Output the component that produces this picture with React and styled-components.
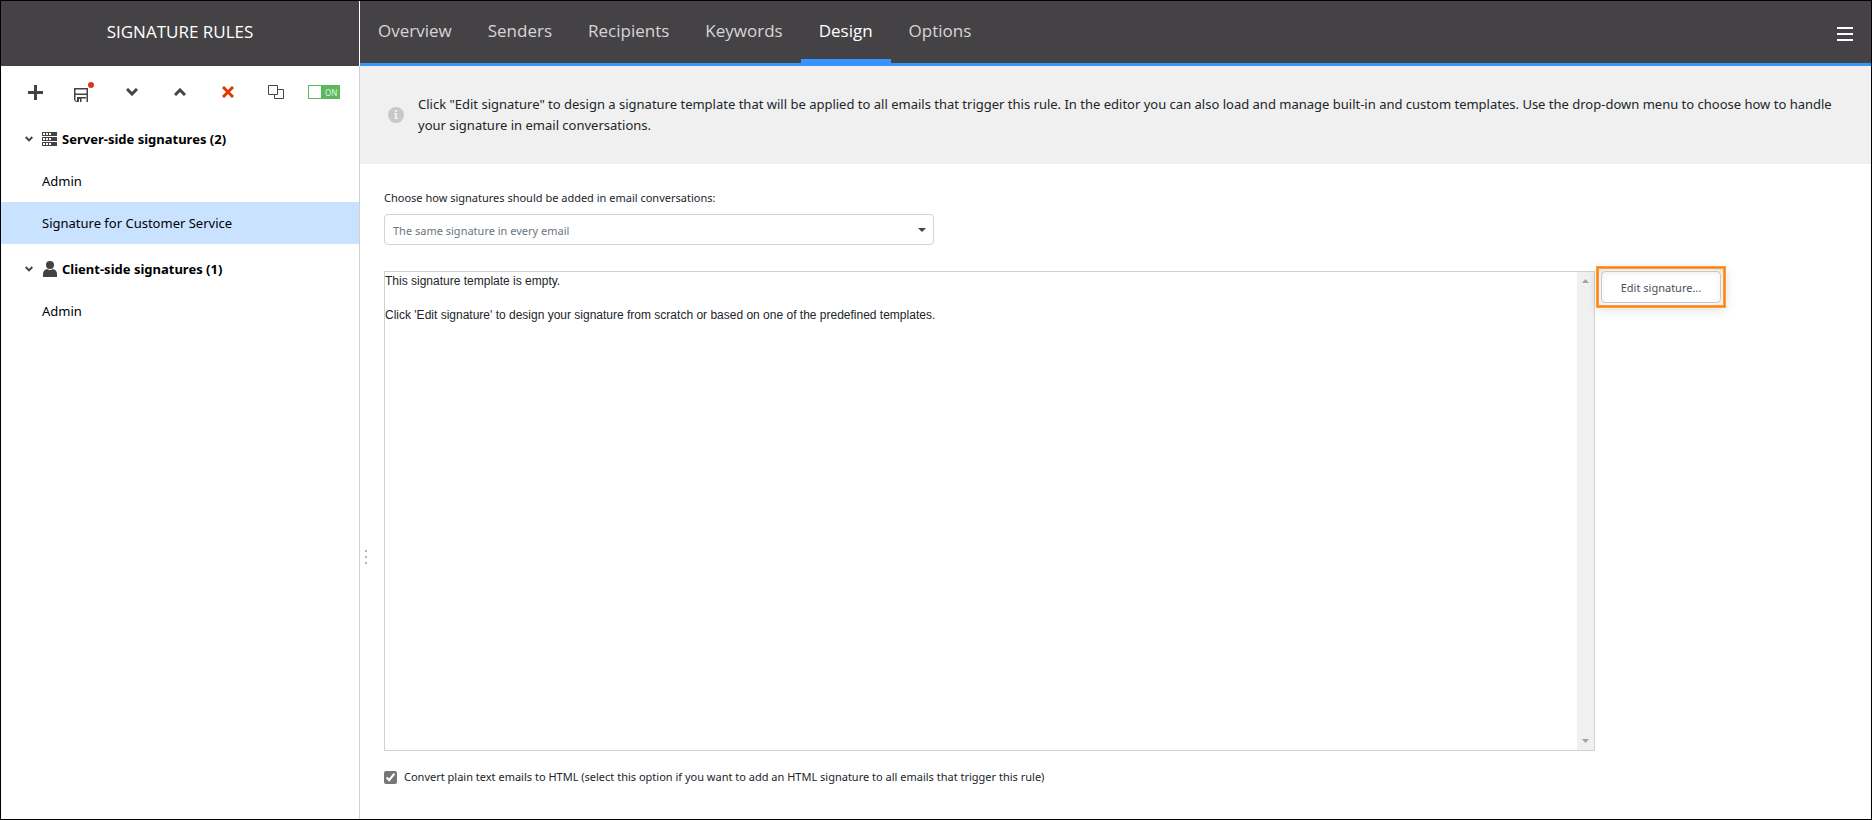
import React, { useState } from "react";
import styled, { createGlobalStyle } from "styled-components";

const tabs = ["Overview", "Senders", "Recipients", "Keywords", "Design", "Options"];

export default function App() {
  const [activeTab, setActiveTab] = useState("Design");
  const [selected, setSelected] = useState("service");
  const [enabled, setEnabled] = useState(true);

  return (
    <>
      <GlobalStyle />
      <Page>
        <Sidebar>
          <SidebarTitle>SIGNATURE RULES</SidebarTitle>
          <SidebarBody>
            <Toolbar>
              <ToolButton aria-label="Add">
                <svg width="16" height="15">
                  <path d="M6 0h3v6h6v3h-6v6h-3v-6h-6v-3h6z" fill="#444244" />
                </svg>
              </ToolButton>
              <ToolButton aria-label="Save">
                <SaveIcon />
              </ToolButton>
              <ToolButton aria-label="Move down">
                <Chevron width="12" height="8" />
              </ToolButton>
              <ToolButton aria-label="Move up">
                <Chevron width="12" height="8" up />
              </ToolButton>
              <ToolButton aria-label="Delete">
                <svg width="12" height="12">
                  <path d="M1 1l10 10M11 1l-10 10" stroke="#d83b01" strokeWidth="3" />
                </svg>
              </ToolButton>
              <ToolButton aria-label="Copy">
                <svg width="16" height="14" fill="none" stroke="#444244">
                  <path d="M.5.5h9v9h-9z" />
                  <path d="M9.500 4.500h6v9h-9v-4" />
                </svg>
              </ToolButton>
              <Switch
                role="switch"
                aria-checked={enabled}
                aria-label="Rule enabled"
                onClick={() => setEnabled(!enabled)}
              >
                <Knob />
                ON
              </Switch>
            </Toolbar>

            <Group>
              <Chevron width="8" height="6" />
              <ServerIcon />
              Server-side signatures (2)
            </Group>
            <Rule $active={selected === "admin"} onClick={() => setSelected("admin")}>
              Admin
            </Rule>
            <Rule $active={selected === "service"} onClick={() => setSelected("service")}>
              Signature for Customer Service
            </Rule>
            <Group>
              <Chevron width="8" height="6" />
              <UserIcon />
              Client-side signatures (1)
            </Group>
            <Rule $active={selected === "client"} onClick={() => setSelected("client")}>
              Admin
            </Rule>
          </SidebarBody>
        </Sidebar>

        <Main>
          <Header>
            <Tabs>
              {tabs.map((tab) => (
                <Tab key={tab} $active={tab === activeTab} onClick={() => setActiveTab(tab)}>
                  {tab}
                </Tab>
              ))}
            </Tabs>
            <MenuButton aria-label="Menu">
              <svg width="16" height="14" fill="#fff">
                <path d="M0 0h16v2h-16zM0 6h16v2h-16zM0 12h16v2h-16z" />
              </svg>
            </MenuButton>
          </Header>

          <Info>
            <InfoIcon />
            <p>
              Click "Edit signature" to design a signature template that will be
              applied to all emails that trigger this rule. In the editor you can
              also load and manage built-in and custom templates. Use the
              drop-down menu to choose how to handle your signature in email
              conversations.
            </p>
          </Info>

          <Workspace>
            <Splitter>
              <Dot />
              <Dot />
              <Dot />
            </Splitter>
            <Form onSubmit={(e) => e.preventDefault()}>
              <Label htmlFor="mode">
                Choose how signatures should be added in email conversations:
              </Label>
              <SelectBox>
                <Select id="mode">
                  <option>The same signature in every email</option>
                </Select>
                <svg width="8" height="4">
                  <path d="M0 0h8l-4 4z" fill="#444" />
                </svg>
              </SelectBox>

              <Template>
                <Preview>
                  <PreviewText>
                    <p>This signature template is empty.</p>
                    <p>
                      Click 'Edit signature' to design your signature from
                      scratch or based on one of the predefined templates.
                    </p>
                  </PreviewText>
                  <ScrollBar>
                    <svg width="7" height="4">
                      <path d="M0 4h7l-3.500-4z" fill="#a3a3a3" />
                    </svg>
                    <svg width="7" height="4">
                      <path d="M0 0h7l-3.500 4z" fill="#a3a3a3" />
                    </svg>
                  </ScrollBar>
                </Preview>
                <Highlight>
                  <EditButton>Edit signature...</EditButton>
                </Highlight>
              </Template>

              <CheckLabel>
                <input type="checkbox" defaultChecked />
                Convert plain text emails to HTML (select this option if you want
                to add an HTML signature to all emails that trigger this rule)
              </CheckLabel>
            </Form>
          </Workspace>
        </Main>
      </Page>
    </>
  );
}

function Chevron({ width, height, up }) {
  return (
    <svg width={width} height={height} viewBox="0 0 12 8" fill="none">
      <path d={up ? "M1 7l5-5 5 5" : "M1 1l5 5 5-5"} stroke="#444244" strokeWidth="3" />
    </svg>
  );
}

function SaveIcon() {
  return (
    <svg width="20" height="20">
      <path
        d="M0 6h14v14h-1.500v-7h-11v5l2 2h-1.500l-2-2zM1.500 7.500v4h11v-4zM3 15h9v1.500h-4.500v3.500h-1.500v-3h-1v3h-2z"
        fill="#444244"
        fillRule="evenodd"
      />
      <circle cx="17" cy="3" r="3" fill="#d83b1b" />
    </svg>
  );
}

function ServerIcon() {
  return (
    <svg width="15" height="14">
      {[0, 5, 10].map((y) => (
        <g key={y}>
          <path d={`M0 ${y}h15v4h-15z`} fill="#444244" />
          <path d={`M1 ${y + 1}h2v2h-2zM4 ${y + 1}h2v2h-2zM7 ${y + 1}h2v2h-2z`} fill="#fff" />
        </g>
      ))}
    </svg>
  );
}

function UserIcon() {
  return (
    <svg width="15" height="16" fill="#444244">
      <circle cx="8" cy="4" r="4" />
      <path d="M1 16v-3q0-4 4-5q3 2 6 0q4 1 4 5v3z" />
    </svg>
  );
}

function InfoIcon() {
  return (
    <svg width="16" height="16">
      <circle cx="8" cy="8" r="8" fill="#c9c7c9" />
      <path d="M7 3h2v2h-2zM6 6h3v5h1v1h-4v-1h1v-4h-1z" fill="#f0f0f0" />
    </svg>
  );
}

const GlobalStyle = createGlobalStyle`
  * {
    box-sizing: border-box;
  }
  body {
    margin: 0;
    font-family: "Noto Sans", "Open Sans", sans-serif;
    font-size: 13px;
    color: #212529;
  }
  p {
    margin: 0;
  }
  svg {
    display: block;
    flex: none;
  }
  button {
    border: 0;
    padding: 0;
    background: none;
    font: inherit;
    color: inherit;
    cursor: pointer;
  }
`;

const Page = styled.div`
  display: flex;
  min-height: 100vh;
  border: 1px solid #000;
  background-color: #fff;
`;

const Sidebar = styled.aside`
  display: flex;
  flex-direction: column;
  flex: none;
  width: 359px;
`;

const SidebarTitle = styled.h1`
  display: flex;
  align-items: center;
  justify-content: center;
  height: 65px;
  margin: 0;
  padding-bottom: 4px;
  border-right: 1px solid #fff;
  background-color: #444244;
  color: #fff;
  font-family: "Open Sans", sans-serif;
  font-size: 17px;
  font-weight: 400;
`;

const SidebarBody = styled.div`
  flex: 1;
  border-right: 1px solid #d0d0d0;
`;

const Toolbar = styled.div`
  display: flex;
  align-items: center;
  gap: 16px;
  height: 48px;
  padding-top: 4px;
  padding-left: 19px;
`;

const ToolButton = styled.button`
  display: flex;
  align-items: center;
  justify-content: center;
  width: 32px;
  height: 32px;
`;

const Switch = styled.button`
  display: flex;
  align-items: center;
  gap: 4px;
  width: 32px;
  height: 14px;
  padding: 1px;
  background-color: #5cb85c;
  color: #e4f4e4;
  font-size: 8px;
`;

const Knob = styled.span`
  width: 12px;
  height: 12px;
  background-color: #fff;
`;

const Group = styled.button`
  display: flex;
  align-items: center;
  width: 100%;
  height: 46px;
  padding-top: 4px;
  padding-left: 24px;
  color: #000;
  font-weight: 700;

  svg + svg {
    margin: 0 5px 0 9px;
  }
`;

const Rule = styled.button`
  display: block;
  width: 100%;
  height: 42px;
  padding-left: 41px;
  background-color: ${(props) => (props.$active ? "#c9e2ff" : "#fff")};
  color: #000;
  text-align: left;
`;

const Main = styled.main`
  display: flex;
  flex-direction: column;
  flex: 1;
`;

const Header = styled.header`
  display: flex;
  justify-content: space-between;
  height: 65px;
  border-bottom: 3px solid #3794ff;
  background-color: #444244;
`;

const Tabs = styled.nav`
  display: flex;
`;

const Tab = styled.button`
  padding: 0 18px;
  border-bottom: 4px solid ${(props) => (props.$active ? "#3794ff" : "transparent")};
  color: ${(props) => (props.$active ? "#fff" : "#d6d6d6")};
  font-family: "Open Sans", sans-serif;
  font-size: 17px;
`;

const MenuButton = styled.button`
  padding: 3px 18px 0;
`;

const Info = styled.section`
  display: flex;
  align-items: center;
  gap: 14px;
  min-height: 98px;
  padding: 0 14px 0 28px;
  background-color: #f0f0f0;
  line-height: 21px;
`;

const Workspace = styled.div`
  display: flex;
  flex: 1;
`;

const Splitter = styled.div`
  display: flex;
  flex-direction: column;
  align-items: center;
  justify-content: center;
  gap: 4px;
  width: 12px;
  padding-top: 130px;
`;

const Dot = styled.span`
  width: 2px;
  height: 2px;
  background-color: #b4b4b4;
`;

const Form = styled.form`
  display: flex;
  flex-direction: column;
  flex: 1;
  padding: 24px 24px 32px 12px;
  font-size: 11px;
`;

const Label = styled.label`
  margin-bottom: 6px;
  line-height: 20px;
`;

const SelectBox = styled.div`
  display: grid;
  grid-template-columns: 1fr 16px;
  align-items: center;
  width: 100%;
  max-width: 550px;
  margin-bottom: 26px;

  svg {
    grid-area: 1 / 2;
    pointer-events: none;
  }
`;

const Select = styled.select`
  grid-area: 1 / 1 / 2 / 3;
  height: 31px;
  padding: 1px 8px 0;
  border: 1px solid #ced4da;
  border-radius: 4px;
  background-color: #fff;
  color: #6c757d;
  font: inherit;
  appearance: none;
`;

const Template = styled.div`
  display: flex;
  align-items: flex-start;
  flex: 1;
`;

const Preview = styled.div`
  display: flex;
  align-self: stretch;
  flex: 1;
  border: 1px solid #d0d0d0;
`;

const PreviewText = styled.div`
  display: flex;
  flex-direction: column;
  flex: 1;
  gap: 17px;
  padding: 1px 0;
  font-family: "Liberation Sans", Arial, sans-serif;
  font-size: 12px;
  line-height: 17px;
`;

const ScrollBar = styled.div`
  display: flex;
  flex-direction: column;
  align-items: center;
  justify-content: space-between;
  width: 17px;
  padding: 7px 0;
  background-color: #f0f0f0;
`;

const Highlight = styled.div`
  width: 128px;
  margin: -4px 122px 0 2px;
  padding: 3px;
  border: 1px solid #ff8000;
  box-shadow: 0 0 0 1px #ffa040, inset 0 0 0 1px #ffa040,
    0 2px 10px rgba(0, 0, 0, 0.15), inset 0 2px 10px rgba(0, 0, 0, 0.15);
`;

const EditButton = styled.button`
  width: 100%;
  height: 32px;
  border: 1px solid #c4c9d2;
  border-radius: 4px;
  color: #495057;
`;

const CheckLabel = styled.label`
  display: flex;
  align-items: center;
  gap: 7px;
  margin-top: 16px;
  line-height: 20px;

  input {
    width: 13px;
    height: 13px;
    margin: 0;
    accent-color: #767676;
  }
`;
